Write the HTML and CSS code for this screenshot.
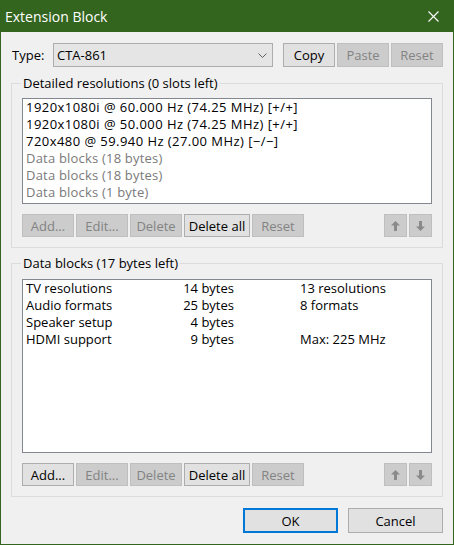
FILE: index.html
```html
<!DOCTYPE html>
<html>
<head>
<meta charset="utf-8">
<link rel="stylesheet" href="styles.css">
</head>
<body>
<div class="window">
  <div class="titlebar">
    <span class="title">Extension Block</span>
    <span class="close"><svg width="11" height="11" viewBox="0 0 11 11"><path d="M0.5 0.5L10.5 10.5M10.5 0.5L0.5 10.5" stroke="#fff" stroke-width="1.1" fill="none"/></svg></span>
  </div>
  <div class="content">
    <div class="type-row">
      <span class="type-label">Type:</span>
      <div class="combo"><span>CTA-861</span><svg class="chev" width="9" height="5" viewBox="0 0 9 5"><path d="M0.5 0.5L4.5 4.5L8.5 0.5" stroke="#606060" stroke-width="1" fill="none"/></svg></div>
      <div class="type-buttons">
        <button class="btn tall">Copy</button>
        <button class="btn tall" disabled>Paste</button>
        <button class="btn tall" disabled>Reset</button>
      </div>
    </div>

    <fieldset class="group g1">
      <legend>Detailed resolutions (0 slots left)</legend>
      <div class="listbox lb1">
        <div class="row">1920x1080i @ 60.000 Hz (74.25 MHz) [+/+]</div>
        <div class="row">1920x1080i @ 50.000 Hz (74.25 MHz) [+/+]</div>
        <div class="row">720x480 @ 59.940 Hz (27.00 MHz) [−/−]</div>
        <div class="row dim">Data blocks (18 bytes)</div>
        <div class="row dim">Data blocks (18 bytes)</div>
        <div class="row dim">Data blocks (1 byte)</div>
      </div>
      <div class="btn-row">
        <button class="btn" disabled>Add...</button>
        <button class="btn" disabled>Edit...</button>
        <button class="btn" disabled>Delete</button>
        <button class="btn wide">Delete all</button>
        <button class="btn" disabled>Reset</button>
        <span class="spacer"></span>
        <button class="btn icon" disabled><svg width="9" height="10" viewBox="0 0 9 10"><path d="M4.5 0L9 4.5H6V10H3V4.5H0Z" fill="#8a8a8a"/></svg></button>
        <button class="btn icon" disabled><svg width="9" height="10" viewBox="0 0 9 10"><path d="M4.5 10L9 5.5H6V0H3V5.5H0Z" fill="#8a8a8a"/></svg></button>
      </div>
    </fieldset>

    <fieldset class="group g2">
      <legend>Data blocks (17 bytes left)</legend>
      <div class="listbox lb2">
        <div class="row cols"><span>TV resolutions</span><span class="c2">14 bytes</span><span class="c3">13 resolutions</span></div>
        <div class="row cols"><span>Audio formats</span><span class="c2">25 bytes</span><span class="c3">8 formats</span></div>
        <div class="row cols"><span>Speaker setup</span><span class="c2">4 bytes</span><span class="c3"></span></div>
        <div class="row cols"><span>HDMI support</span><span class="c2">9 bytes</span><span class="c3">Max: 225 MHz</span></div>
      </div>
      <div class="btn-row">
        <button class="btn">Add...</button>
        <button class="btn" disabled>Edit...</button>
        <button class="btn" disabled>Delete</button>
        <button class="btn wide">Delete all</button>
        <button class="btn" disabled>Reset</button>
        <span class="spacer"></span>
        <button class="btn icon" disabled><svg width="9" height="10" viewBox="0 0 9 10"><path d="M4.5 0L9 4.5H6V10H3V4.5H0Z" fill="#8a8a8a"/></svg></button>
        <button class="btn icon" disabled><svg width="9" height="10" viewBox="0 0 9 10"><path d="M4.5 10L9 5.5H6V0H3V5.5H0Z" fill="#8a8a8a"/></svg></button>
      </div>
    </fieldset>

    <div class="dialog-buttons">
      <button class="btn dlg default">OK</button>
      <button class="btn dlg">Cancel</button>
    </div>
  </div>
</div>
</body>
</html>
```

FILE: styles.css
```css
* { box-sizing: border-box; }
html, body { margin: 0; padding: 0; }
body {
  font-family: "Open Sans", "Noto Sans", sans-serif;
  font-size: 13px;
  color: #000;
  background: #f0f0f0;
}
.window {
  width: 454px;
  height: 545px;
  border: 1px solid #34651f;
  background: #f0f0f0;
  display: flex;
  flex-direction: column;
}
.titlebar {
  height: 31px;
  flex: none;
  background: #34651f;
  color: #fff;
  display: flex;
  align-items: center;
  justify-content: space-between;
  padding-left: 4px;
  font-size: 14px;
}
.close {
  width: 40px;
  height: 31px;
  display: flex;
  align-items: center;
  justify-content: center;
}
.content {
  padding: 11px 10px 0;
  display: flex;
  flex-direction: column;
}
.type-row {
  display: flex;
  align-items: center;
  height: 24px;
}
.type-label { width: 42px; padding-left: 1px; }
.combo {
  width: 220px;
  height: 24px;
  border: 1px solid #adadad;
  background: #e5e5e5;
  display: flex;
  align-items: center;
  justify-content: space-between;
  padding-left: 3px;
  padding-right: 5px;
}
.type-buttons { margin-left: auto; display: flex; gap: 2px; }
.btn {
  width: 52px;
  height: 23px;
  border: 1px solid #adadad;
  background: #e1e1e1;
  color: #000;
  font: inherit;
  padding: 0;
  display: flex;
  align-items: center;
  justify-content: center;
  white-space: nowrap;
}
.btn.tall { height: 24px; }
.btn:disabled {
  background: #cccccc;
  border-color: #bfbfbf;
  color: #838383;
}
.btn.wide { width: 66px; }
.btn.icon { width: 23px; }
.group {
  margin: 0;
  border: 1px solid #dcdcdc;
  padding: 6px 10px 10px;
  min-inline-size: 0;
}
.group legend {
  padding: 0 2px;
  margin-left: -1px;
  height: 17px;
  line-height: 17px;
}
.g1 { margin-top: 8px; }
.g2 { margin-top: 7px; padding-top: 7px; }
.listbox {
  background: #fff;
  border: 1px solid #828790;
  padding: 0 3px;
}
.lb1 { height: 106px; letter-spacing: 0.45px; }
.lb1 .dim { letter-spacing: 0.2px; }
.lb2 { height: 174px; }
.row {
  height: 17px;
  line-height: 17px;
  white-space: nowrap;
}
.dim { color: #7a7a7a; }
.cols {
  display: grid;
  grid-template-columns: 130px 78px 1fr;
}
.c2 { text-align: right; }
.c3 { padding-left: 66px; }
.btn-row {
  display: flex;
  gap: 2px;
  margin-top: 10px;
}
.spacer { flex: 1; }
.dialog-buttons {
  display: flex;
  justify-content: flex-end;
  gap: 10px;
  margin-top: 11px;
}
.btn.dlg { width: 95px; height: 25px; }
.btn.default { border: 2px solid #0078d7; }
```
